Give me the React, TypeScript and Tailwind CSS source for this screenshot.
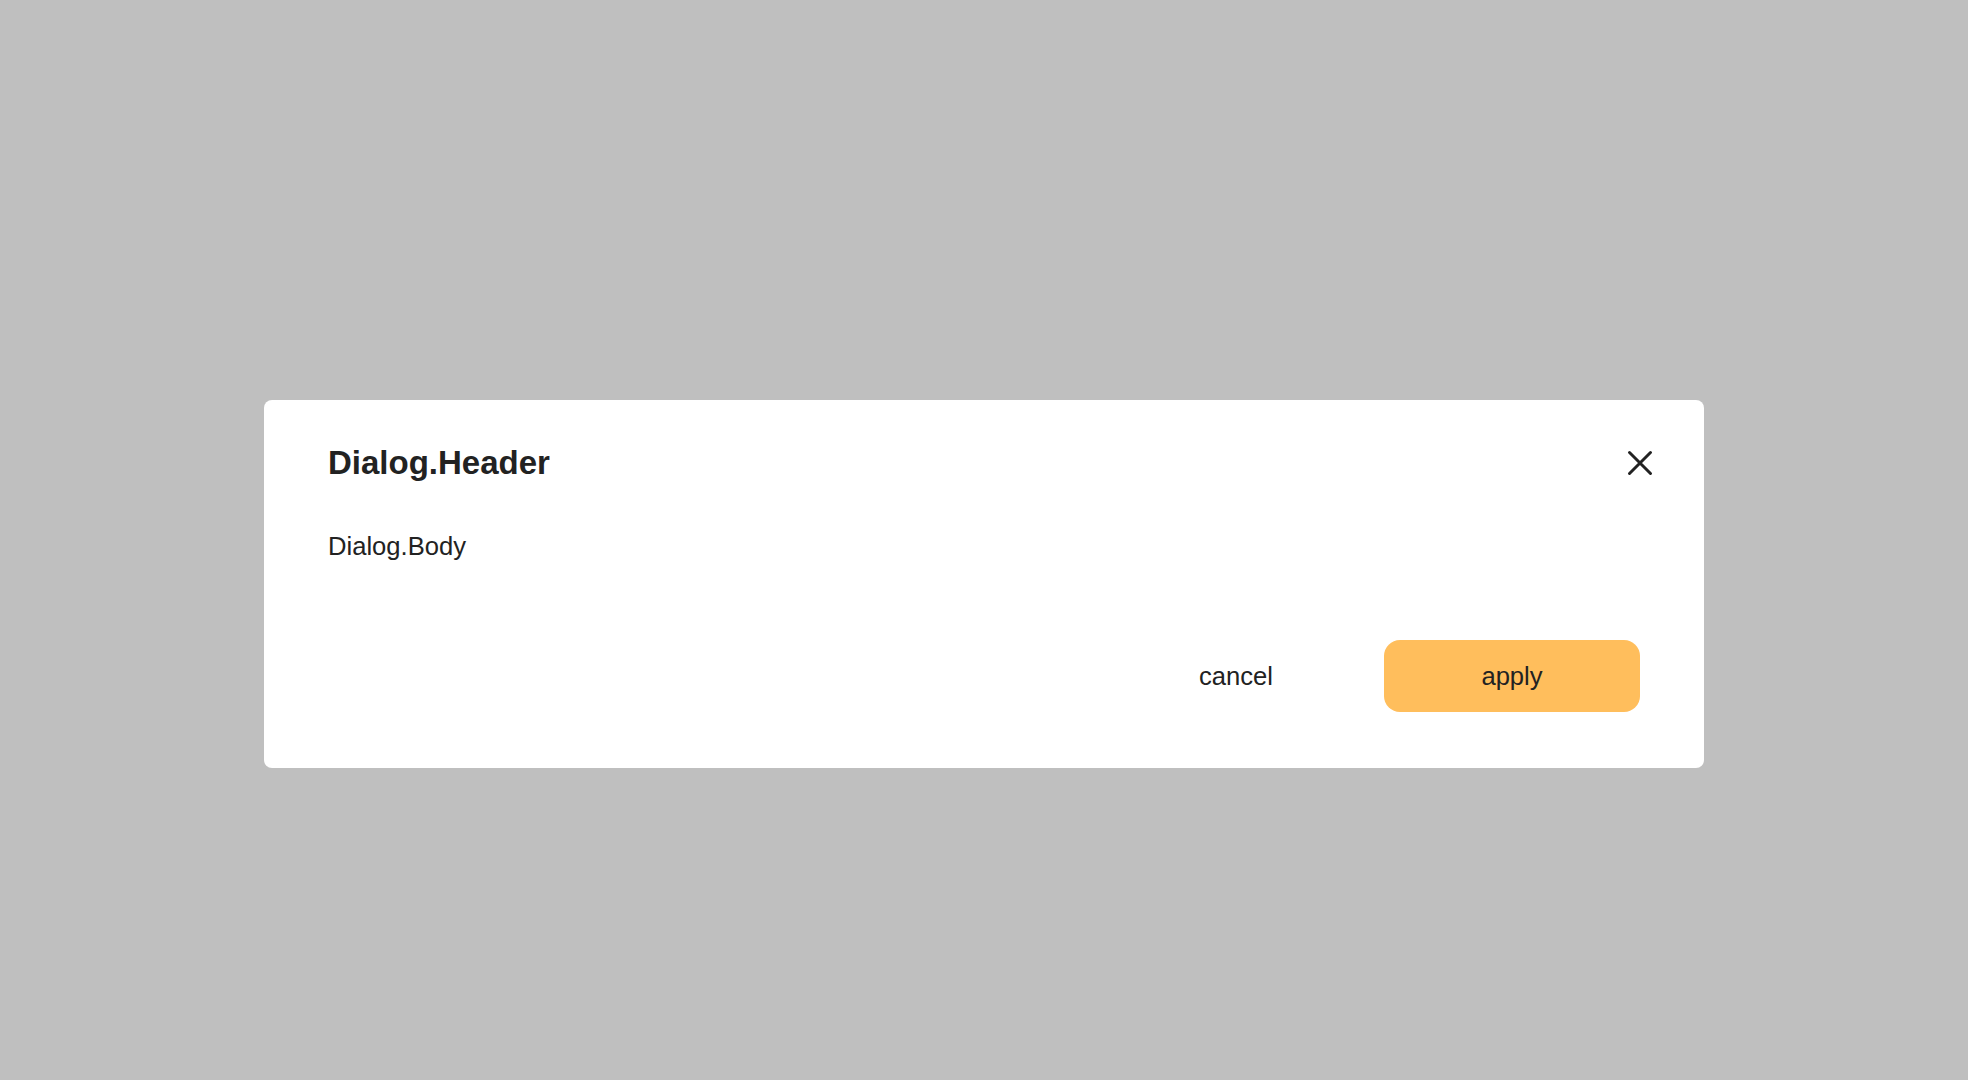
export default function App() {
  return (
    <div
      className="w-full h-[1080px] bg-[#bfbfbf] flex justify-center pt-[400px] text-[#222222]"
      style={{ fontFamily: '"Liberation Sans", Arial, sans-serif' }}
    >
      <div
        role="dialog"
        aria-labelledby="dialog-title"
        className="w-[1440px] h-[368px] bg-white rounded-[8px] flex flex-col"
      >
        <div className="flex items-center justify-between pl-16 pr-[50px] pt-[43px]">
          <h2 id="dialog-title" className="text-[33px] leading-[40px] font-bold">
            Dialog.Header
          </h2>
          <button aria-label="close" className="w-[28px] h-[28px] flex items-center justify-center">
            <svg width="28" height="28" viewBox="0 0 28 28" fill="none">
              <path
                d="M3.5 3.5L24.5 24.5M24.5 3.5L3.5 24.5"
                stroke="#222222"
                strokeWidth="3"
                strokeLinecap="round"
              />
            </svg>
          </button>
        </div>

        <p className="pl-16 mt-[47px] text-[25.6px] leading-[32px]">Dialog.Body</p>

        <div className="flex justify-end gap-5 pr-16 mt-[78px]">
          <button className="w-[256px] h-[72px] rounded-[16px] text-[25.6px]">cancel</button>
          <button className="w-[256px] h-[72px] rounded-[16px] text-[25.6px] bg-[#ffbe5c]">
            apply
          </button>
        </div>
      </div>
    </div>
  );
}
